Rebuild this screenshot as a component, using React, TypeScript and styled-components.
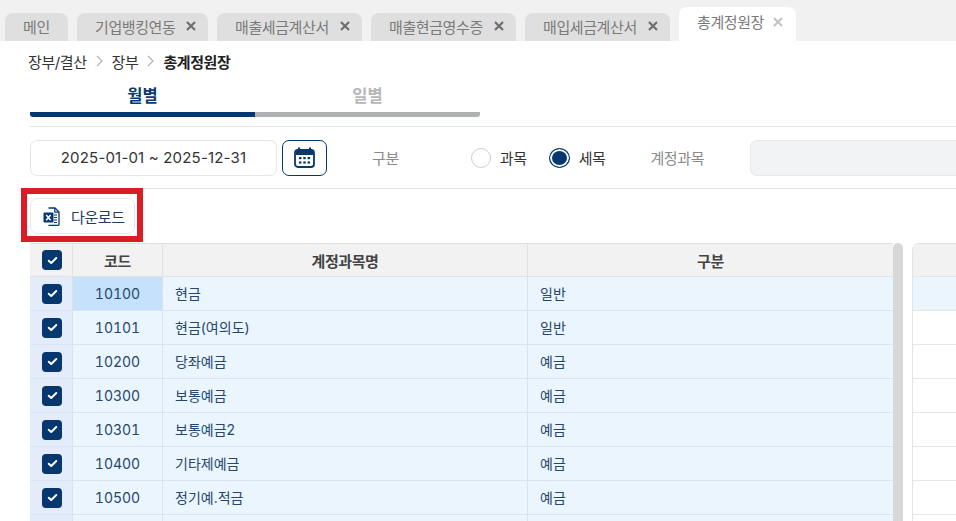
import styled, { createGlobalStyle } from "styled-components";

const GlobalStyle = createGlobalStyle`
  html, body {
    margin: 0;
    height: 521px;
    overflow: hidden;
    background: #fff;
    font-family: Inter, "Noto Sans CJK KR", sans-serif;
  }
`;

const Page = styled.div`
  width: 956px;
  height: 521px;
  overflow: hidden;
`;

const TabBar = styled.div`
  display: flex;
  align-items: flex-end;
  gap: 9px;
  height: 41px;
  padding-left: 5px;
  background: #f1f1f1;
`;

const Tab = styled.div<{ $active?: boolean; $width: number }>`
  box-sizing: border-box;
  display: flex;
  align-items: center;
  gap: ${(p) => (p.$active ? 9 : 11)}px;
  width: ${(p) => p.$width}px;
  height: ${(p) => (p.$active ? 34 : 28)}px;
  padding: 0 0 ${(p) => (p.$active ? 5 : 2)}px 18px;
  border-radius: 8px 8px 0 0;
  background: ${(p) => (p.$active ? "#fff" : "#dfdfdf")};
  color: #7a7a7a;
  font-size: 15px;
  letter-spacing: -0.4px;
`;

const CloseIcon = styled.svg<{ $active?: boolean }>`
  width: 10px;
  height: 10px;
  stroke: ${(p) => (p.$active ? "#c4c4c4" : "#6e6e6e")};
  stroke-width: 2.2;
`;

const Content = styled.div`
  padding: 0 0 0 30px;
`;

const Breadcrumb = styled.div`
  display: flex;
  align-items: center;
  gap: 9px;
  height: 40px;
  margin-left: -2px;
  font-size: 15px;
  color: #333;
  letter-spacing: -0.4px;
`;

const Current = styled.strong`
  font-weight: 700;
  color: #222;
`;

const Chevron = styled.svg`
  width: 7px;
  height: 12px;
  fill: none;
  stroke: #b5b5b5;
  stroke-width: 1.2;
`;

const PeriodTabs = styled.div`
  display: flex;
  width: 450px;
`;

const PeriodTab = styled.div<{ $active?: boolean }>`
  flex: 1;
  height: 36px;
  box-sizing: border-box;
  padding-top: 1px;
  border-bottom: 5px solid ${(p) => (p.$active ? "#07376f" : "#afb1b3")};
  border-radius: ${(p) => (p.$active ? "3px 0 0 3px" : "0 3px 3px 0")};
  text-align: center;
  line-height: 28px;
  font-size: 16.5px;
  font-weight: 700;
  color: ${(p) => (p.$active ? "#0b3a70" : "#b4b6b8")};
`;

const FilterRow = styled.div`
  display: flex;
  align-items: center;
  height: 61px;
  margin-top: 9px;
  border-top: 1px solid #e4e4e4;
  border-bottom: 1px solid #e4e4e4;
`;

const DateInput = styled.div`
  box-sizing: border-box;
  width: 247px;
  height: 36px;
  border: 1px solid #e6e6e6;
  border-radius: 7px;
  text-align: center;
  line-height: 34px;
  font-size: 15px;
  letter-spacing: 0.18px;
  color: #333;
`;

const CalendarButton = styled.div`
  box-sizing: border-box;
  display: flex;
  align-items: center;
  justify-content: center;
  width: 45px;
  height: 36px;
  margin-left: 5px;
  border: 1px solid #07376f;
  border-radius: 7px;
`;

const FieldLabel = styled.span<{ $left: number }>`
  margin-left: ${(p) => p.$left}px;
  font-size: 15px;
  color: #8a8a8a;
  letter-spacing: -0.4px;
`;

const RadioOption = styled.label<{ $left: number }>`
  display: flex;
  align-items: center;
  gap: 9px;
  margin-left: ${(p) => p.$left}px;
  font-size: 15px;
  color: #333;
  letter-spacing: -0.4px;
`;

const RadioDot = styled.span<{ $checked?: boolean }>`
  box-sizing: border-box;
  width: ${(p) => (p.$checked ? 21 : 20)}px;
  height: 20px;
  border-radius: 50%;
  border: 1px solid ${(p) => (p.$checked ? "#07376f" : "#cfcfcf")};
  background: ${(p) => (p.$checked ? "#07376f" : "#fff")};
  box-shadow: ${(p) => (p.$checked ? "inset 0 0 0 2px #fff" : "none")};
`;

const DisabledInput = styled.div`
  flex: 1;
  height: 36px;
  margin-left: 46px;
  box-sizing: border-box;
  border: 1px solid #e6e8ea;
  border-right: none;
  border-radius: 7px 0 0 7px;
  background: #f1f3f5;
`;

const ActionRow = styled.div`
  display: flex;
  align-items: center;
  height: 54px;
`;

const DownloadWrap = styled.div`
  position: relative;
  display: flex;
`;

const DownloadButton = styled.button`
  box-sizing: border-box;
  display: flex;
  align-items: center;
  gap: 11px;
  width: 105px;
  height: 36px;
  padding: 0 0 0 12px;
  border: 1px solid #e6e6e6;
  border-radius: 7px;
  background: #fff;
  font-family: inherit;
  font-size: 15px;
  letter-spacing: -0.4px;
  color: #223f60;
`;

const Highlight = styled.div`
  position: absolute;
  inset: -10px -8px -8px -9px;
  border: 6px solid #dc1c24;
  pointer-events: none;
`;

const Grids = styled.div`
  display: flex;
`;

const MainGrid = styled.div`
  width: 863px;
  border-top: 1px solid #dfdfdf;
`;

const ScrollBar = styled.div`
  width: 10px;
  margin-right: 9px;
  border-radius: 5px 5px 0 0;
  background: #d6d8da;
`;

const SideGrid = styled.div`
  flex: 1;
  border-top: 1px solid #dfdfdf;
  border-left: 1px solid #e4e4e4;
  border-top-left-radius: 7px;
  overflow: hidden;
`;

const Row = styled.div<{ $header?: boolean }>`
  box-sizing: border-box;
  display: grid;
  grid-template-columns: 43px 90px 365px 1fr;
  height: ${(p) => (p.$header ? 33 : 34)}px;
  border-bottom: 1px solid ${(p) => (p.$header ? "#dfe3e6" : "#d9e5f0")};
  background: ${(p) => (p.$header ? "#f2f2f2" : "#eaf5fe")};
`;

const Cell = styled.div`
  box-sizing: border-box;
  display: flex;
  align-items: center;
  padding: 0 12px 2px;
  border-right: 1px solid #dbe3ea;
  font-size: 14px;
  color: #27466a;
  &:last-child {
    border-right: none;
  }
`;

const CodeCell = styled(Cell)<{ $selected?: boolean }>`
  justify-content: center;
  padding: 0;
  font-size: 14px;
  font-variant-numeric: tabular-nums;
  background: ${(p) => (p.$selected ? "#c5e1fb" : "transparent")};
`;

const CheckCell = styled(Cell)<{ $body?: boolean }>`
  justify-content: center;
  padding: 0;
  background: ${(p) => (p.$body ? "#e4ecfb" : "transparent")};
`;

const HeadCell = styled(Cell)`
  justify-content: center;
  padding: 0;
  font-size: 15px;
  letter-spacing: -0.4px;
  font-weight: 700;
  color: #444;
`;

const CheckBox = styled.span`
  display: flex;
  align-items: center;
  justify-content: center;
  width: 20px;
  height: 20px;
  margin-left: 2px;
  border-radius: 4px;
  background: #07376f;
`;

const SideRow = styled.div<{ $kind: "header" | "selected" | "plain" }>`
  box-sizing: border-box;
  height: ${(p) => (p.$kind === "header" ? 33 : 34)}px;
  border-bottom: 1px solid ${(p) => (p.$kind === "plain" ? "#e6e6e6" : "#dfe6ec")};
  background: ${(p) =>
    p.$kind === "header" ? "#f2f2f2" : p.$kind === "selected" ? "#eaf5fe" : "#fff"};
`;

const tabs = [
  { label: "메인", width: 63, closable: false },
  { label: "기업뱅킹연동", width: 131, closable: true },
  { label: "매출세금계산서", width: 145, closable: true },
  { label: "매출현금영수증", width: 145, closable: true },
  { label: "매입세금계산서", width: 145, closable: true },
];

const rows = [
  ["10100", "현금", "일반"],
  ["10101", "현금(여의도)", "일반"],
  ["10200", "당좌예금", "예금"],
  ["10300", "보통예금", "예금"],
  ["10301", "보통예금2", "예금"],
  ["10400", "기타제예금", "예금"],
  ["10500", "정기예.적금", "예금"],
  ["", "", ""],
];

const Close = ({ active }: { active?: boolean }) => (
  <CloseIcon $active={active} viewBox="0 0 10 10">
    <path d="M1 1l8 8M9 1l-8 8" />
  </CloseIcon>
);

const Sep = () => (
  <Chevron viewBox="0 0 7 12">
    <path d="M1 1l5 5-5 5" />
  </Chevron>
);

const Check = () => (
  <CheckBox>
    <svg width="11" height="9" viewBox="0 0 12 10" fill="none">
      <path d="M1.8 5.2l2.8 2.6L10.2 2.2" stroke="#fff" strokeWidth="2.2" strokeLinecap="round" strokeLinejoin="round" />
    </svg>
  </CheckBox>
);

const CalendarIcon = () => (
  <svg width="21" height="21" viewBox="0 0 21 21">
    <path d="M5 1.2v3M16 1.2v3" stroke="#07376f" strokeWidth="2" strokeLinecap="round" />
    <rect x="1" y="3" width="19" height="17" rx="3" fill="none" stroke="#07376f" strokeWidth="1.8" />
    <path d="M2 5a2 2 0 0 1 2-2h13a2 2 0 0 1 2 2v3H2z" fill="#07376f" />
    <g fill="#07376f">
      <rect x="5" y="10" width="2.4" height="2.2" />
      <rect x="9.3" y="10" width="2.4" height="2.2" />
      <rect x="13.6" y="10" width="2.4" height="2.2" />
      <rect x="5" y="14.4" width="2.4" height="2.2" />
      <rect x="9.3" y="14.4" width="2.4" height="2.2" />
      <rect x="13.6" y="14.4" width="2.4" height="2.2" />
    </g>
  </svg>
);

const ExcelIcon = () => (
  <svg width="17" height="19" viewBox="0 0 17 19">
    <path d="M5.5 1h6.5l4 4v12.5a.8.8 0 0 1-.8.8H5.5" fill="none" stroke="#07376f" strokeWidth="1.3" />
    <path d="M11.8 1v4.2H16" fill="none" stroke="#07376f" strokeWidth="1.2" />
    <path d="M11 8h3M11 10.5h3M11 13h3M11 15.5h3" stroke="#07376f" strokeWidth="1.2" />
    <rect x="0.5" y="5.5" width="10" height="10" rx="1" fill="#07376f" />
    <path d="M3.2 8l4.4 5.2M7.6 8l-4.4 5.2" stroke="#fff" strokeWidth="1.5" />
  </svg>
);

export default function App() {
  return (
    <Page>
      <GlobalStyle />
      <TabBar>
        {tabs.map((t) => (
          <Tab key={t.label} $width={t.width}>
            {t.label}
            {t.closable && <Close />}
          </Tab>
        ))}
        <Tab $active $width={117}>
          총계정원장
          <Close active />
        </Tab>
      </TabBar>
      <Content>
        <Breadcrumb>
          장부/결산
          <Sep />
          장부
          <Sep />
          <Current>총계정원장</Current>
        </Breadcrumb>
        <PeriodTabs>
          <PeriodTab $active>월별</PeriodTab>
          <PeriodTab>일별</PeriodTab>
        </PeriodTabs>
        <FilterRow>
          <DateInput>2025-01-01 ~ 2025-12-31</DateInput>
          <CalendarButton>
            <CalendarIcon />
          </CalendarButton>
          <FieldLabel $left={45}>구분</FieldLabel>
          <RadioOption $left={72}>
            <RadioDot />
            과목
          </RadioOption>
          <RadioOption $left={22}>
            <RadioDot $checked />
            세목
          </RadioOption>
          <FieldLabel $left={45}>계정과목</FieldLabel>
          <DisabledInput />
        </FilterRow>
        <ActionRow>
          <DownloadWrap>
            <DownloadButton>
              <ExcelIcon />
              다운로드
            </DownloadButton>
            <Highlight />
          </DownloadWrap>
        </ActionRow>
        <Grids>
          <MainGrid>
            <Row $header>
              <HeadCell>
                <Check />
              </HeadCell>
              <HeadCell>코드</HeadCell>
              <HeadCell>계정과목명</HeadCell>
              <HeadCell>구분</HeadCell>
            </Row>
            {rows.map((r, i) => (
              <Row key={i}>
                <CheckCell $body>{r[0] && <Check />}</CheckCell>
                <CodeCell $selected={i === 0}>{r[0]}</CodeCell>
                <Cell>{r[1]}</Cell>
                <Cell>{r[2]}</Cell>
              </Row>
            ))}
          </MainGrid>
          <ScrollBar />
          <SideGrid>
            <SideRow $kind="header" />
            <SideRow $kind="selected" />
            {rows.slice(1).map((r, i) => (
              <SideRow key={i} $kind="plain" />
            ))}
          </SideGrid>
        </Grids>
      </Content>
    </Page>
  );
}
